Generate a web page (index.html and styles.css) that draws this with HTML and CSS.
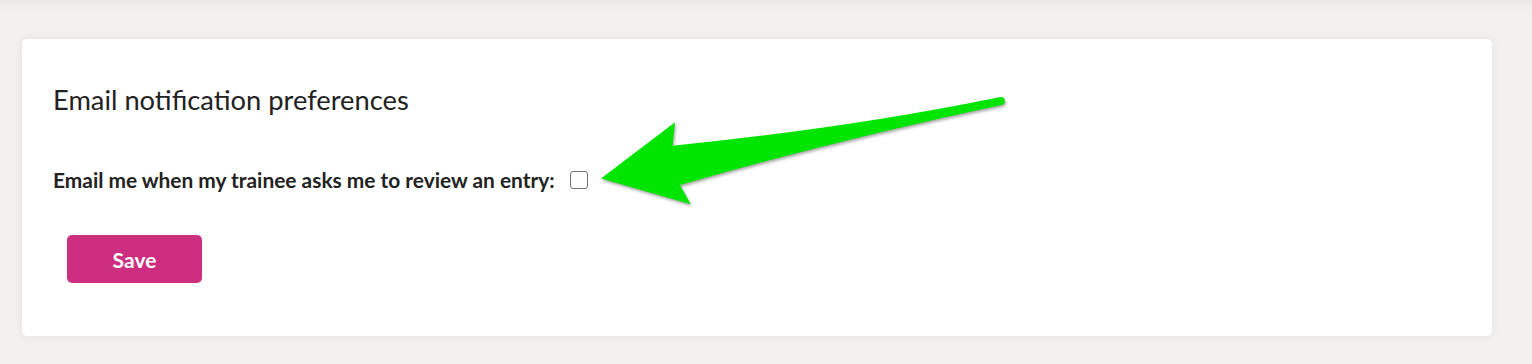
FILE: index.html
```html
<!DOCTYPE html>
<html lang="en">
<head>
<meta charset="utf-8">
<title>Email notification preferences</title>
<link rel="stylesheet" href="styles.css">
</head>
<body>
<div class="topshade"></div>
<main class="page">
  <section class="card">
    <h2 class="title">Email notification preferences</h2>
    <form class="prefs">
      <div class="field">
        <label class="label" for="review">Email me when my trainee asks me to review an entry:</label>
        <input class="check" type="checkbox" id="review">
      </div>
      <button class="save" type="button">Save</button>
    </form>
  </section>
</main>
<svg class="arrow" width="1532" height="364" viewBox="0 0 1532 364" aria-hidden="true">
  <path d="M601 178.5 L675 122.3 L672.7 145.7 Q850 128 1000.4 97.05 A4 4 0 0 1 1001.6 104.95 Q840 139 680 185 L690.7 204.3 Z" fill="#00e500"/>
</svg>
</body>
</html>
```
FILE: styles.css
```css
html, body {
  margin: 0;
  padding: 0;
}
body {
  background: #f2f1ef;
  font-family: Lato, "Liberation Sans", sans-serif;
  color: #222;
  position: relative;
  width: 1532px;
  height: 364px;
  overflow: hidden;
}
.topshade {
  height: 12px;
  background: linear-gradient(to bottom, rgba(0,0,0,0.035), rgba(0,0,0,0));
  margin-bottom: -12px;
}
.page {
  padding: 39px 40px 0 22px;
}
.card {
  background: #fff;
  width: 1470px;
  height: 297px;
  box-sizing: border-box;
  border-radius: 5px;
  box-shadow: 0 0 10px rgba(0,0,0,0.07);
  padding: 44px 31px 0 31px;
}
.title {
  margin: 0;
  font-size: 27.3px;
  font-weight: 400;
  line-height: 33px;
  color: #222;
}
.prefs {
  margin: 51px 0 0 0;
}
.field {
  display: flex;
  align-items: center;
  gap: 15px;
  height: 25px;
}
.label {
  font-size: 20.9px;
  font-weight: 700;
  line-height: 25px;
  color: #222;
}
.check {
  appearance: none;
  -webkit-appearance: none;
  margin: 0;
  width: 18px;
  height: 18px;
  box-sizing: border-box;
  border: 1.5px solid #737373;
  border-radius: 3px;
  background: #fff;
}
.save {
  display: block;
  margin: 43px 0 0 14px;
  width: 135px;
  height: 48px;
  border: none;
  border-radius: 5px;
  background: #cd2e7f;
  color: #fff;
  font-family: Lato, "Liberation Sans", sans-serif;
  font-weight: 700;
  font-size: 21px;
  padding: 0;
}
.arrow {
  position: absolute;
  left: 0;
  top: 0;
  pointer-events: none;
  filter: drop-shadow(1px 2px 1.5px rgba(0,0,0,0.35));
}
```
